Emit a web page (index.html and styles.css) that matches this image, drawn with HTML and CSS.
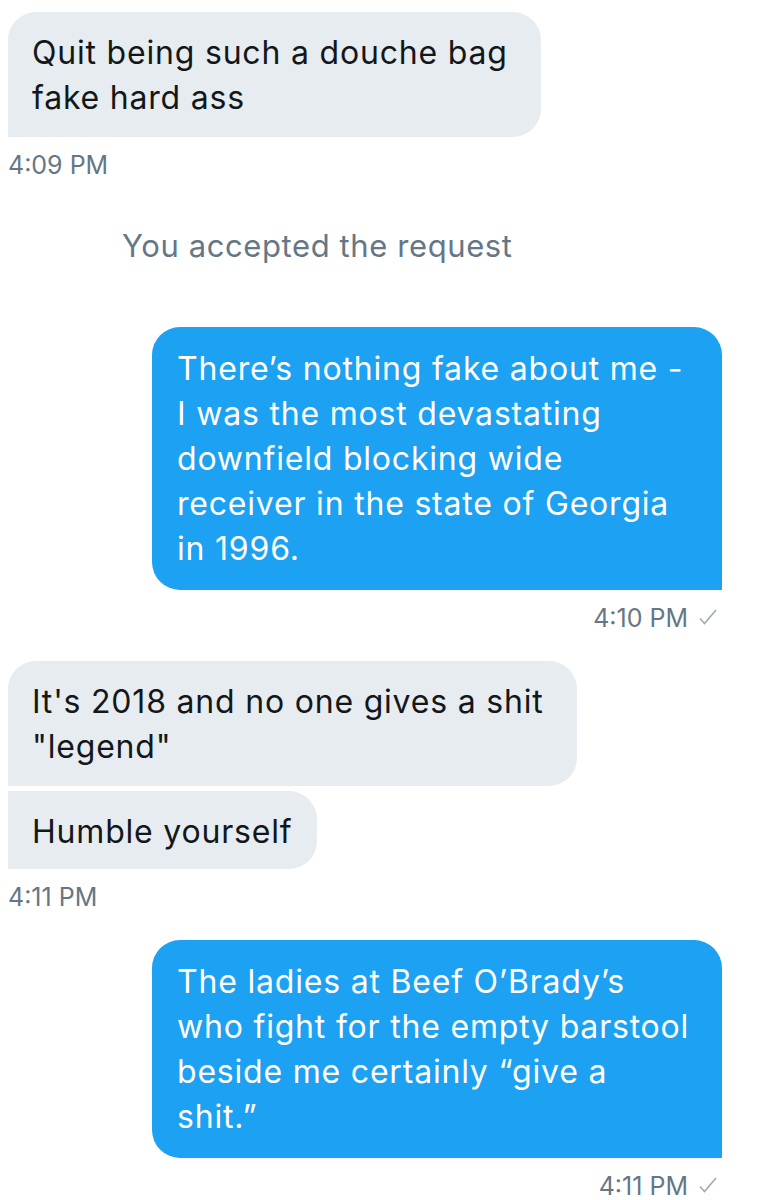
FILE: index.html
```html
<!DOCTYPE html>
<html>

<head>
    <title>Messages</title>
    <link rel="stylesheet" href="styles.css">
</head>

<body>
    <div class="thread">
        <div class="msg them first last">Quit being such a douche bag<br>fake hard ass</div>
        <div class="time">4:09 PM</div>

        <div class="notice">You accepted the request</div>

        <div class="msg me">There’s nothing fake about me -<br>I was the most devastating<br>downfield blocking wide<br>receiver in the state of Georgia<br>in 1996.</div>
        <div class="time right">4:10 PM
            <svg class="check" width="18" height="16" viewBox="0 0 18 16"><path d="M1 9.5 L5.5 14.5 L17 1" /></svg>
        </div>

        <div class="msg them first">It's 2018 and no one gives a shit<br>"legend"</div>
        <div class="msg them last single">Humble yourself</div>
        <div class="time">4:11 PM</div>

        <div class="msg me">The ladies at Beef O’Brady’s<br>who fight for the empty barstool<br>beside me certainly “give a<br>shit.”</div>
        <div class="time right">4:11 PM
            <svg class="check" width="18" height="16" viewBox="0 0 18 16"><path d="M1 9.5 L5.5 14.5 L17 1" /></svg>
        </div>
    </div>
</body>

</html>
```

FILE: styles.css
```css
body {
    margin: 0;
    background-color: #fff;
    font-family: Inter, "Noto Sans", sans-serif;
}

.thread {
    display: flex;
    flex-direction: column;
    align-items: flex-start;
    padding: 12px 40px 0 8px;
}

.msg {
    font-size: 32px;
    line-height: 45px;
    letter-spacing: 0.8px;
    border-radius: 28px;
}

.them {
    background-color: #e6ecf0;
    color: #14171a;
    padding: 18px 33px 17px 24px;
    border-top-left-radius: 0;
    border-bottom-left-radius: 0;
    margin-top: 5px;
}

.them.first {
    border-top-left-radius: 28px;
    margin-top: 0;
}

.them.single {
    padding-right: 25px;
    padding-bottom: 15px;
}

.me {
    align-self: flex-end;
    box-sizing: border-box;
    width: 570px;
    background-color: #1da1f2;
    color: #fff;
    padding: 19px 30px 19px 25px;
    border-bottom-right-radius: 0;
}

.time {
    display: flex;
    align-items: flex-start;
    font-size: 25px;
    line-height: 30px;
    color: #657786;
    margin-top: 13px;
    margin-bottom: 28px;
}

.time.right {
    align-self: flex-end;
    margin-right: 5px;
}

.check {
    margin: 6px 0 0 11px;
    fill: none;
    stroke: #a0aab3;
    stroke-width: 1.6;
}

.notice {
    margin: 20px 0 63px 114px;
    font-size: 31px;
    line-height: 36px;
    letter-spacing: 0.6px;
    color: #657786;
}
```
